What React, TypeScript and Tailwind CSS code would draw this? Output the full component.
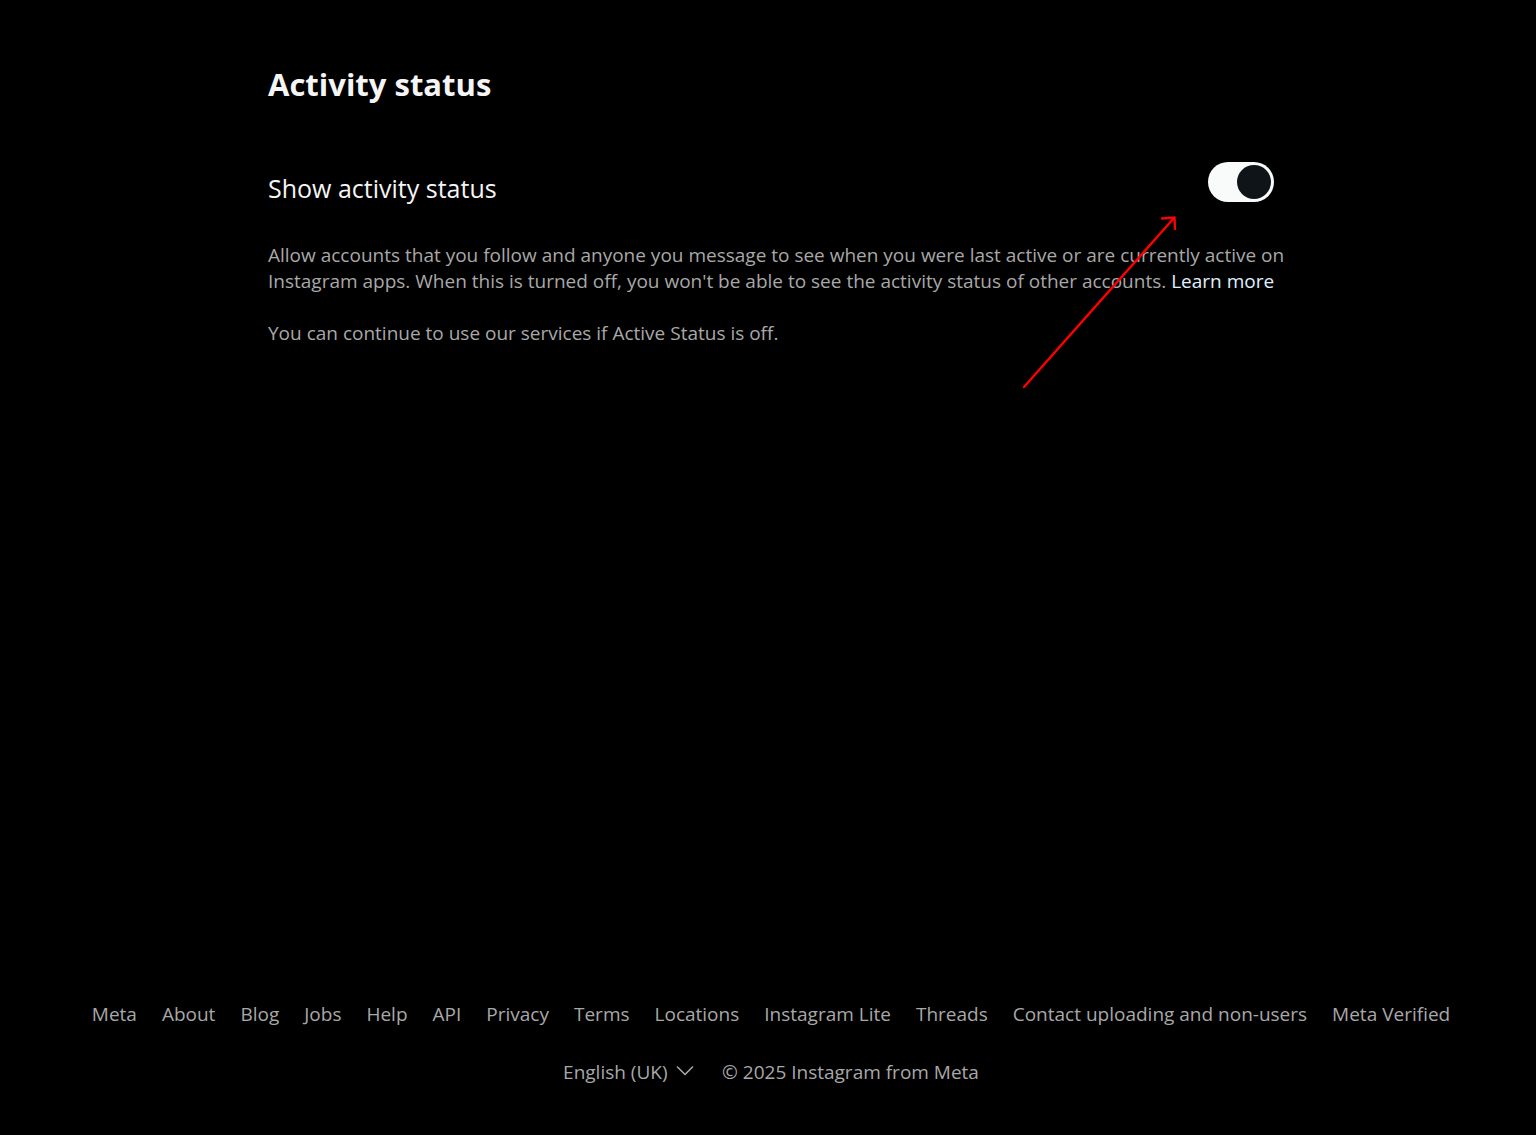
import { useState } from "react";
import classNames from "clsx";

const LINKS = [
  "Meta",
  "About",
  "Blog",
  "Jobs",
  "Help",
  "API",
  "Privacy",
  "Terms",
  "Locations",
  "Instagram Lite",
  "Threads",
  "Contact uploading and non-users",
  "Meta Verified",
];

export default function App() {
  const [active, setActive] = useState(true);

  return (
    <div className="flex min-h-screen flex-col bg-black pl-1.5 font-['Segoe_UI','Open_Sans',sans-serif] text-[19px] text-[#a8a8a8]">
      <main className="relative mx-auto w-full max-w-[1006px] grow pt-16">
        <h1 className="text-[31px] leading-10 font-bold text-[#f5f5f5]">
          Activity status
        </h1>
        <div className="mt-[58px] flex items-start justify-between">
          <label
            htmlFor="activity"
            className="pt-2.5 text-[25px] leading-8 text-[#f5f5f5]"
          >
            Show activity status
          </label>
          <Toggle id="activity" checked={active} onChange={setActive} />
        </div>
        <p className="-mr-4 mt-[38px] leading-[26px]">
          Allow accounts that you follow and anyone you message to see when you
          were last active or are currently active on Instagram apps. When this
          is turned off, you won't be able to see the activity status of other
          accounts.{" "}
          <a href="#learn-more" className="text-[#e0f1ff] hover:underline">
            Learn more
          </a>
        </p>
        <p className="mt-[26px] leading-[26px]">
          You can continue to use our services if Active Status is off.
        </p>
        <Arrow />
      </main>
      <Footer />
    </div>
  );
}

type ToggleProps = {
  id: string;
  checked: boolean;
  onChange: (checked: boolean) => void;
};

function Toggle({ id, checked, onChange }: ToggleProps) {
  return (
    <span
      className={classNames(
        "relative flex h-10 w-[66px] shrink-0 items-center rounded-full px-[3px]",
        checked ? "justify-end bg-[#f9fbfb]" : "justify-start bg-[#363636]"
      )}
    >
      <span className="size-[34px] rounded-full bg-[#0f1419]" />
      <input
        id={id}
        type="checkbox"
        role="switch"
        checked={checked}
        onChange={(e) => onChange(e.target.checked)}
        className="absolute inset-0 size-full cursor-pointer opacity-0"
      />
    </span>
  );
}

// points at the switch, drawn over the text
function Arrow() {
  return (
    <svg
      viewBox="0 0 156 174"
      fill="none"
      stroke="#ff0000"
      strokeWidth="2.4"
      strokeLinecap="round"
      aria-hidden="true"
      className="pointer-events-none absolute top-[215px] right-[98px] h-[174px] w-[156px]"
    >
      <path d="M4 172 154 3M142 3.5 154.500 2.500 155 14" />
    </svg>
  );
}

function Footer() {
  return (
    <footer className="flex flex-col items-center gap-8 pb-[50px] leading-[26px]">
      <ul className="flex flex-wrap justify-center gap-x-[25px]">
        {LINKS.map((link) => (
          <li key={link}>
            <a href="#" className="hover:underline">
              {link}
            </a>
          </li>
        ))}
      </ul>
      <div className="flex items-center gap-7">
        <label className="flex items-center gap-2">
          <select
            aria-label="Language"
            className="cursor-pointer appearance-none bg-transparent"
          >
            <option>English (UK)</option>
          </select>
          <svg
            viewBox="0 0 18 12"
            fill="none"
            stroke="currentColor"
            strokeWidth="1.6"
            strokeLinecap="round"
            strokeLinejoin="round"
            className="h-3 w-[18px]"
          >
            <path d="M1.500 1 9 8.500 16.500 1" />
          </svg>
        </label>
        <span>© 2025 Instagram from Meta</span>
      </div>
    </footer>
  );
}
